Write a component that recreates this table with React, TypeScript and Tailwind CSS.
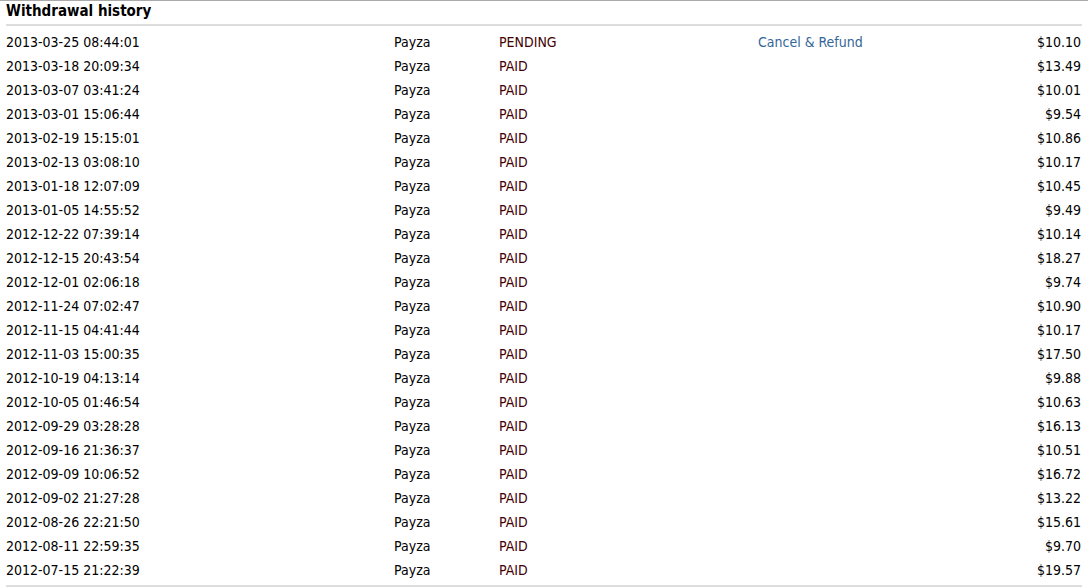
const rows: [string, string, string][] = [
  ["2013-03-25 08:44:01", "PENDING", "$10.10"],
  ["2013-03-18 20:09:34", "PAID", "$13.49"],
  ["2013-03-07 03:41:24", "PAID", "$10.01"],
  ["2013-03-01 15:06:44", "PAID", "$9.54"],
  ["2013-02-19 15:15:01", "PAID", "$10.86"],
  ["2013-02-13 03:08:10", "PAID", "$10.17"],
  ["2013-01-18 12:07:09", "PAID", "$10.45"],
  ["2013-01-05 14:55:52", "PAID", "$9.49"],
  ["2012-12-22 07:39:14", "PAID", "$10.14"],
  ["2012-12-15 20:43:54", "PAID", "$18.27"],
  ["2012-12-01 02:06:18", "PAID", "$9.74"],
  ["2012-11-24 07:02:47", "PAID", "$10.90"],
  ["2012-11-15 04:41:44", "PAID", "$10.17"],
  ["2012-11-03 15:00:35", "PAID", "$17.50"],
  ["2012-10-19 04:13:14", "PAID", "$9.88"],
  ["2012-10-05 01:46:54", "PAID", "$10.63"],
  ["2012-09-29 03:28:28", "PAID", "$16.13"],
  ["2012-09-16 21:36:37", "PAID", "$10.51"],
  ["2012-09-09 10:06:52", "PAID", "$16.72"],
  ["2012-09-02 21:27:28", "PAID", "$13.22"],
  ["2012-08-26 22:21:50", "PAID", "$15.61"],
  ["2012-08-11 22:59:35", "PAID", "$9.70"],
  ["2012-07-15 21:22:39", "PAID", "$19.57"],
];

export default function App() {
  return (
    <div
      className="w-[1088px] h-[588px] bg-white border-t border-[#aaaaaa] text-[14px] text-black"
      style={{ fontFamily: '"DejaVu Sans Condensed", "DejaVu Sans", sans-serif' }}
    >
      <div className="mx-[6px] w-[1076px]">
        <div className="h-[23px] pt-[1px] font-bold text-[15px] leading-[18px]">
          Withdrawal history
        </div>
        <div className="h-[2px] bg-[#dddddd]" />
        <div className="pt-[4px]">
          {rows.map(([date, status, amount], i) => (
            <div key={date} className="flex h-[24px] items-center">
              <div className="w-[388px]">{date}</div>
              <div className="w-[105px]">Payza</div>
              <div className="w-[259px] text-[#440000]">{status}</div>
              <div className="w-[200px] text-[#336699]">
                {i === 0 ? "Cancel & Refund" : ""}
              </div>
              <div className="flex-1 text-right pr-[1px]">{amount}</div>
            </div>
          ))}
        </div>
        <div className="mt-[3px] h-[2px] bg-[#dddddd]" />
      </div>
    </div>
  );
}
